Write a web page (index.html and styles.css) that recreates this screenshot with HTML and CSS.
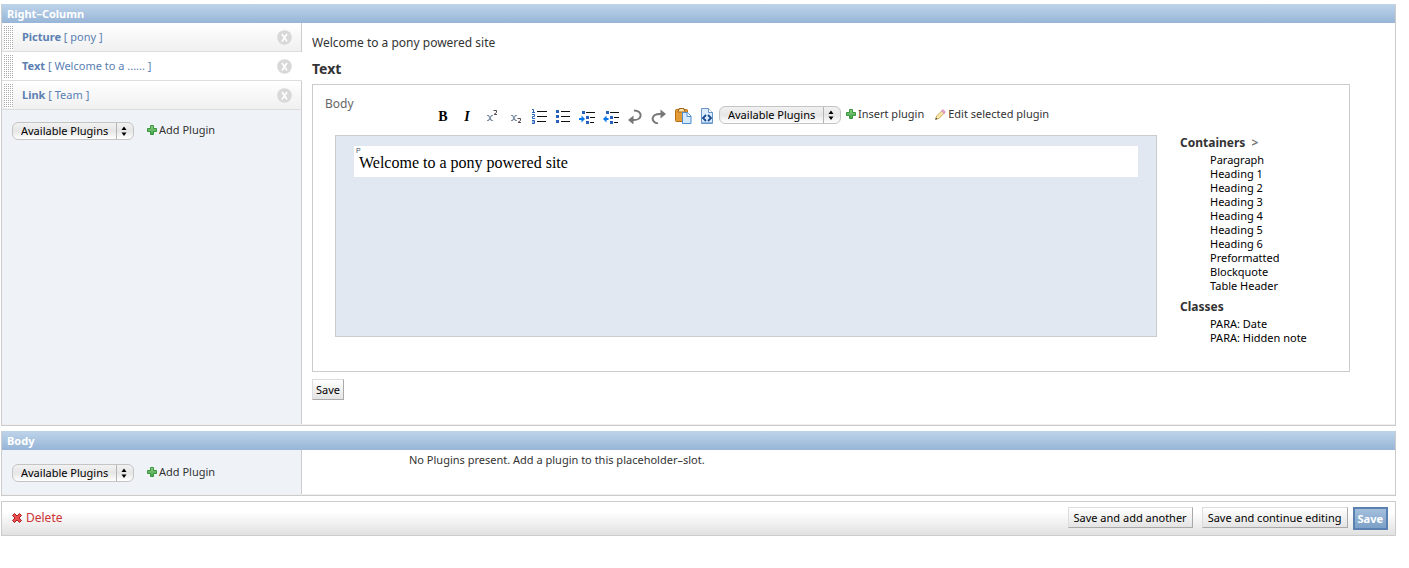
FILE: index.html
```html
<!DOCTYPE html>
<html lang="en">
<head>
<meta charset="utf-8">
<title>Change page</title>
<link rel="stylesheet" href="styles.css">
</head>
<body>
<svg class="defs" width="0" height="0" aria-hidden="true">
  <defs>
    <linearGradient id="green" x1="0" y1="0" x2="0" y2="1"><stop offset="0" stop-color="#8ed183"/><stop offset="1" stop-color="#3fa545"/></linearGradient>
    <symbol id="plus" viewBox="0 0 10 10"><path d="M3.5.5h3v3h3v3h-3v3h-3v-3h-3v-3h3z" fill="url(#green)" stroke="#3a9440"/></symbol>
    <symbol id="arrows" viewBox="0 0 16 18"><path d="M.5 1v16" stroke="#b5b5b5"/><path d="M5.500 8L8 4.500 10.500 8zM5.500 10.500L8 14l2.500-3.500z" fill="#000"/></symbol>
    <symbol id="cross" viewBox="0 0 15 15"><circle cx="7.500" cy="7.500" r="7.300" fill="#d8d8d8"/><path d="M5 4l5 7.500M10 4L5 11.500" stroke="#fff" stroke-width="1.600"/></symbol>
  </defs>
</svg>
<form class="page">
  <section class="module">
    <h2 class="module-title">Right–Column</h2>
    <div class="module-body tall">
      <div class="sidebar">
        <ul class="plugins">
          <li class="plugin"><span class="grip"></span><a href="#" class="plugin-link"><b>Picture</b> [ pony ]</a><button type="button" class="remove" aria-label="Remove Picture"><svg width="15" height="15"><use href="#cross"/></svg></button></li>
          <li class="plugin selected"><span class="grip"></span><a href="#" class="plugin-link"><b>Text</b> [ Welcome to a ...... ]</a><button type="button" class="remove" aria-label="Remove Text"><svg width="15" height="15"><use href="#cross"/></svg></button></li>
          <li class="plugin"><span class="grip"></span><a href="#" class="plugin-link"><b>Link</b> [ Team ]</a><button type="button" class="remove" aria-label="Remove Link"><svg width="15" height="15"><use href="#cross"/></svg></button></li>
        </ul>
        <div class="add-row">
          <span class="picker"><select aria-label="Plugin for Right-Column"><option>Available Plugins</option></select><svg class="picker-arrows" width="16" height="18"><use href="#arrows"/></svg></span>
          <a href="#" class="action"><svg width="10" height="10"><use href="#plus"/></svg>Add Plugin</a>
        </div>
      </div>
      <div class="content">
        <p class="intro">Welcome to a pony powered site</p>
        <h3 class="content-title">Text</h3>
        <div class="frame">
          <span class="field-label">Body</span>
          <div class="toolbar">
            <button type="button" class="tool" aria-label="Bold"><span class="letter">B</span></button>
            <button type="button" class="tool" aria-label="Italic"><span class="letter italic">I</span></button>
            <button type="button" class="tool" aria-label="Superscript"><svg width="16" height="18" fill="none"><path d="M4 9.500h1.500l3 5H10M10 9.500H8.500l-3 5H4" stroke="#7c8fa3" stroke-width="1.200"/><path d="M10.500 4.500h3v2L11 8.500h3" stroke="#5a4a50"/></svg></button>
            <button type="button" class="tool" aria-label="Subscript"><svg width="16" height="18" fill="none"><path d="M4 9.500h1.500l3 5H10M10 9.500H8.500l-3 5H4" stroke="#7c8fa3" stroke-width="1.200"/><path d="M10.500 12.500h3v2L11 16.500h3" stroke="#5a4a50"/></svg></button>
            <button type="button" class="tool" aria-label="Numbered list"><svg width="16" height="18" fill="none"><path d="M6 5.500h10M6 10.500h10M6 15.500h9" stroke="#111"/><path d="M1 3.500h1.500v3M1 6.500h3M1 8.500h2.500v2H1.500v2H4M1 14.500h2.500v3H1M1 16h2" stroke="#2862b8"/></svg></button>
            <button type="button" class="tool" aria-label="Bulleted list"><svg width="16" height="18" fill="none"><path d="M6 5.500h9M6 10.500h9M6 15.500h9" stroke="#111"/><path d="M1 5.500h3M1 10.500h3M1 15.500h3" stroke="#2862b8" stroke-width="3"/></svg></button>
            <button type="button" class="tool" aria-label="Indent"><svg width="16" height="18" fill="none"><path d="M7 6.500h9M11 11.500h5M11 16.500h4" stroke="#111"/><path d="M3 6.500h3M7 11.500h3M7 16.500h3" stroke="#2862b8" stroke-width="3"/><path d="M0 13h3" stroke="#0878e8" stroke-width="2"/><path d="M2.500 9.500L6 13l-3.500 3.500z" fill="#0878e8"/></svg></button>
            <button type="button" class="tool" aria-label="Outdent"><svg width="16" height="18" fill="none"><path d="M7 6.500h9M11 11.500h5M11 16.500h4" stroke="#111"/><path d="M3 6.500h3M7 11.500h3M7 16.500h3" stroke="#2862b8" stroke-width="3"/><path d="M3 13h2.500" stroke="#0878e8" stroke-width="2"/><path d="M3.500 9.500L0 13l3.500 3.500z" fill="#0878e8"/></svg></button>
            <button type="button" class="tool" aria-label="Undo"><svg width="16" height="18" fill="none"><path d="M7 4.500c9 0 9 10-1 9.500" stroke="#777" stroke-width="2"/><path d="M6.500 9.500v9L1 14z" fill="#777"/></svg></button>
            <button type="button" class="tool" aria-label="Redo"><svg width="16" height="18" fill="none"><path d="M7 17.500C-1 16 0 7.500 10 8" stroke="#777" stroke-width="2"/><path d="M9.500 3.500v9L15 8z" fill="#777"/></svg></button>
            <button type="button" class="tool" aria-label="Paste"><svg width="18" height="18" fill="none"><rect x="1.500" y="3.500" width="12" height="12" rx="1" fill="#e39b35" stroke="#b96d13"/><path d="M5 4V2.500h5V4l1 1v1H4V5z" fill="#ffe0a0" stroke="#9d6822"/><path d="M8.500 6.500h5l3.500 3.500v7.500H8.500z" fill="#d5eaff" stroke="#4d8ed0"/><path d="M13 6.500v4h4" fill="#fff" stroke="#4d8ed0"/></svg></button>
            <button type="button" class="tool" aria-label="Edit HTML"><svg width="14" height="18" fill="none"><path d="M1.500 2.500h7l4 4v11h-11z" fill="#dcecff" stroke="#6b95c8"/><path d="M8.500 2.500v4h4" fill="#fff" stroke="#6b95c8"/><path d="M2 16.500h10" stroke="#8eb5e4"/><path d="M6 9l-3 3 3 3M8 9l3 3-3 3" stroke="#17498f" stroke-width="1.800"/></svg></button>
            <span class="picker"><select aria-label="Plugin to insert"><option>Available Plugins</option></select><svg class="picker-arrows" width="16" height="18"><use href="#arrows"/></svg></span>
            <a href="#" class="action insert"><svg width="10" height="10"><use href="#plus"/></svg>Insert plugin</a>
            <a href="#" class="action edit"><svg width="11" height="11" viewBox="0 0 11 11"><path d="M.8 10.200L1.600 7l5.500-5.500 2.400 2.400L4 9.400z" fill="#f8e7a6" stroke="#c39a48" stroke-width=".8"/><path d="M6.500 2L8 .6l2.400 2.400L9 4.500z" fill="#f0a5d8" stroke="#cc80b5" stroke-width=".7"/><path d="M.3 10.700l.6-2 1.400 1.400z" fill="#222"/></svg>Edit selected plugin</a>
          </div>
          <div class="editor">
            <div class="canvas"><div class="paragraph" contenteditable="true"><span class="tag" contenteditable="false">P</span>Welcome to a pony powered site</div></div>
            <div class="styles">
              <h4 class="styles-title">Containers <span class="more">&gt;</span></h4>
              <ul class="styles-list">
                <li><a href="#">Paragraph</a></li><li><a href="#">Heading 1</a></li><li><a href="#">Heading 2</a></li><li><a href="#">Heading 3</a></li><li><a href="#">Heading 4</a></li><li><a href="#">Heading 5</a></li><li><a href="#">Heading 6</a></li><li><a href="#">Preformatted</a></li><li><a href="#">Blockquote</a></li><li><a href="#">Table Header</a></li>
              </ul>
              <h4 class="styles-title">Classes</h4>
              <ul class="styles-list"><li><a href="#">PARA: Date</a></li><li><a href="#">PARA: Hidden note</a></li></ul>
            </div>
          </div>
        </div>
        <button type="button" class="btn">Save</button>
      </div>
    </div>
  </section>
  <section class="module">
    <h2 class="module-title">Body</h2>
    <div class="module-body">
      <div class="sidebar">
        <div class="add-row">
          <span class="picker"><select aria-label="Plugin for Body"><option>Available Plugins</option></select><svg class="picker-arrows" width="16" height="18"><use href="#arrows"/></svg></span>
          <a href="#" class="action"><svg width="10" height="10"><use href="#plus"/></svg>Add Plugin</a>
        </div>
      </div>
      <p class="empty">No Plugins present. Add a plugin to this placeholder–slot.</p>
    </div>
  </section>
  <div class="submit-row">
    <a href="#" class="delete"><svg width="10" height="10" viewBox="0 0 10 10"><path d="M.5 2.500l2-2L5 3 7.500.5l2 2L7 5l2.500 2.500-2 2L5 7 2.500 9.500l-2-2L3 5z" fill="#e8504f" stroke="#a81c20"/></svg>Delete</a>
    <button type="submit" class="btn wide">Save and add another</button>
    <button type="submit" class="btn wide continue">Save and continue editing</button>
    <button type="submit" class="btn primary">Save</button>
  </div>
</form>
</body>
</html>
```

FILE: styles.css
```css
* { box-sizing: border-box; }
body { margin: 0; background: #fff; color: #333; font: 11px/14px "Lucida Grande", "Noto Sans", "DejaVu Sans", sans-serif; }
h2, h3, h4, p, ul { margin: 0; padding: 0; }
ul { list-style: none; }
a { color: inherit; text-decoration: none; }
button, select { font: inherit; color: #000; margin: 0; }
svg { display: block; flex: none; }
.defs { position: absolute; }

.page { display: flex; flex-direction: column; gap: 5px; padding: 4px 13px 0 1px; }
.module { border: 1px solid #ccc; border-top: 0; }
.module-title { height: 19px; padding: 0 5px; font-size: 11px; line-height: 20px; color: #fff; background: linear-gradient(#bed4ea, #97b5d7); }
.module-body { display: flex; min-height: 45px; border-bottom: 1px solid #eee; }
.tall { min-height: 402px; }
.sidebar { flex: none; width: 300px; background: linear-gradient(to left, #ccc 1px, #eff3f8 1px); }

.plugin { display: flex; align-items: center; height: 29px; padding: 0 9px 0 2px; background: linear-gradient(#fff, #f0f0f0); border-bottom: 1px solid #ddd; border-right: 1px solid #ccc; }
.plugin.selected { background: #fff; border-right-color: #fff; }
.grip { width: 9px; height: 25px; background: linear-gradient(#fff 50%, transparent 50%) 0 0 / 2px 2px, linear-gradient(to right, #aaa 50%, #fff 50%) 0 0 / 2px 2px; }
.plugin-link { flex: 1; padding-left: 9px; color: #5b80b2; }
.remove { padding: 0; border: 0; background: none; }

.add-row { display: flex; align-items: center; gap: 13px; padding: 14px 10px 12px; }
.plugins + .add-row { padding-top: 12px; }
.picker { position: relative; display: inline-flex; flex: none; }
.picker select { appearance: none; width: 122px; height: 18px; padding: 0 17px 0 8px; border: 1px solid #c4c4c4; border-radius: 6px; background: linear-gradient(#f2f2f2, #e6e6e6 50%, #fff); line-height: 16px; }
.picker-arrows { position: absolute; right: 2px; top: 0; pointer-events: none; }
.action { display: inline-flex; align-items: center; gap: 2px; margin-bottom: 2px; white-space: nowrap; }

.content { flex: 1; min-width: 0; padding: 12px 45px 24px 10px; }
.intro { font-size: 12px; line-height: 16px; }
.content-title { margin: 9px 0 7px; font-size: 14px; line-height: 17px; }
.frame { padding: 12px 12px 20px; border: 1px solid #ccc; margin-bottom: 7px; }
.field-label { display: block; font-size: 12px; line-height: 14px; color: #666; }
.toolbar { display: flex; align-items: center; height: 18px; margin: -5px 0 11px 106px; }
.tool { display: flex; align-items: center; justify-content: center; flex: none; width: 24px; height: 18px; padding: 0; border: 0; background: none; }
.letter { padding-top: 3px; font: bold 14px/18px "Liberation Serif", serif; }
.italic { font-style: italic; }
.insert { margin-left: 5px; }
.edit { margin-left: 11px; gap: 2px; }
.editor { display: flex; gap: 23px; padding-left: 10px; }
.canvas { flex: 1; height: 202px; padding: 10px 18px; border: 1px solid #ccc; background: #e1e8f2; }
.paragraph { position: relative; padding: 8px 5px 6px; background: #fff; color: #000; font: 16px/17px "Liberation Serif", serif; }
.tag { position: absolute; left: 2px; top: 1px; font: 7px/7px "Liberation Sans", sans-serif; color: #445570; }
.styles { flex: none; width: 157px; }
.styles-title { font-size: 12px; line-height: 16px; margin-bottom: 2px; }
.styles-list { padding-left: 30px; margin-bottom: 6px; color: #000; }
.more { margin-left: 3px; color: #777; }
.btn { height: 21px; padding: 0 3px; border: 1px solid; border-color: #ddd #aaa #aaa #ddd; background: linear-gradient(#fff, #e4e4e4); white-space: nowrap; }
.wide { padding: 0 5px; }
.empty { padding: 3px 0 0 107px; }

.submit-row { display: flex; align-items: flex-start; min-height: 35px; padding: 5px 7px 5px 10px; border: 1px solid #ccc; background: linear-gradient(#fff 30%, #e1e1e1); }
.delete { display: inline-flex; align-items: center; gap: 4px; margin-right: auto; font-size: 12px; line-height: 22px; color: #c33; }
.continue { margin: 0 5px 0 9px; }
.primary { height: 23px; border: 2px solid #5b80b2; background: linear-gradient(#a5bfdd, #7ca0c7); color: #fff; font-weight: bold; }
```
